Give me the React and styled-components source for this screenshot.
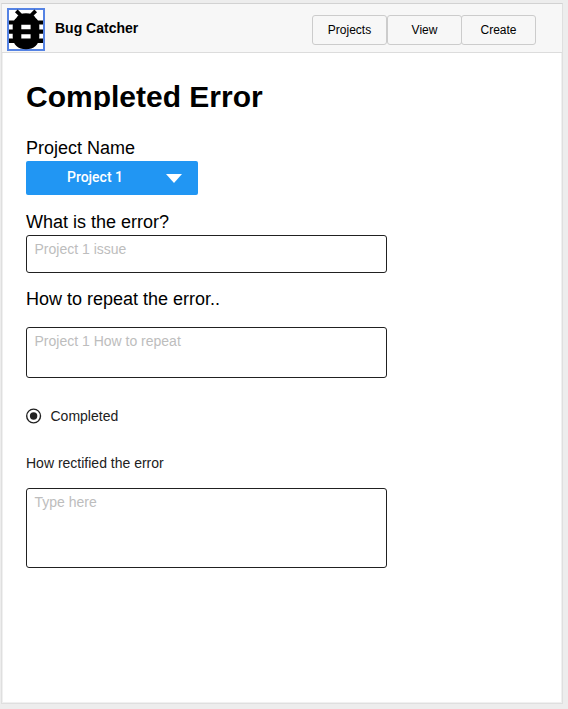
import React from "react";
import styled, { createGlobalStyle } from "styled-components";

const GlobalStyle = createGlobalStyle`
  * { box-sizing: border-box; }
  body {
    margin: 0;
    background: #ededed;
    color: #000;
    font-family: "Liberation Sans", Arial, sans-serif;
  }
`;

const Page = styled.div`
  height: 709px;
  padding: 3px 5px 5px 1px;
  overflow: hidden;
`;

const Frame = styled.div`
  width: 562px;
  height: 701px;
  display: flex;
  flex-direction: column;
  background: #fff;
  border: 1px solid #dfdfdf;
  border-top-color: #d2d2d2;
  box-shadow: inset 0 0 0 1px #f0f0f0;
`;

const Header = styled.header`
  flex: none;
  height: 49px;
  display: flex;
  align-items: flex-start;
  padding: 4px 26px 0 5px;
  background: #f7f7f7;
  border-bottom: 1px solid #dcdcdc;
`;

const Logo = styled.svg`
  flex: none;
  display: block;
  width: 38px;
  height: 43px;
`;

const Brand = styled.div`
  margin: 12px 0 0 10px;
  font-size: 14px;
  line-height: 16px;
  font-weight: 700;
`;

const Nav = styled.nav`
  display: flex;
  margin: 7px 0 0 auto;
`;

const NavButton = styled.button`
  width: 75px;
  height: 30px;
  padding: 0;
  background: #f7f7f7;
  border: 1px solid #ccc;
  border-radius: 3px;
  color: #000;
  font: 12px/28px "Liberation Sans", Arial, sans-serif;

  &:last-child {
    margin-left: -1px;
  }
`;

const Content = styled.main`
  display: flex;
  flex-direction: column;
  align-items: flex-start;
  padding: 24px 24px 0;
`;

const Title = styled.h1`
  height: 33px;
  margin: 0;
  overflow: hidden;
  font-size: 30px;
  line-height: 39px;
  white-space: nowrap;
`;

const Label = styled.div`
  margin-top: ${(p) => p.$gap}px;
  font-size: ${(p) => (p.$small ? 14 : 18)}px;
  line-height: ${(p) => (p.$small ? 16 : 20)}px;
  color: ${(p) => (p.$small ? "#212121" : "#000")};
`;

const Select = styled.button`
  display: flex;
  align-items: center;
  width: 172px;
  height: 34px;
  margin-top: 3px;
  padding: 0 16px 0 0;
  border: 0;
  border-radius: 2px;
  background: #2196f3;
  color: #fff;
  font: 500 14px/16px Roboto, sans-serif;
`;

const SelectText = styled.span`
  flex: 1;
  padding: 0 2px 2px 0;
  text-align: center;
`;

const Caret = styled.svg`
  width: 16px;
  height: 9px;
`;

const Field = styled.div`
  width: 361px;
  height: ${(p) => p.$height}px;
  margin-top: ${(p) => p.$gap}px;
  padding: 5px 7.5px;
  border: 1px solid #212121;
  border-radius: 3px;
  font-size: 14px;
  line-height: 16px;
  color: #bdbdbd;
`;

const RadioRow = styled.div`
  display: flex;
  align-items: center;
  gap: 9px;
  height: 16px;
  margin: 30px 0 0 -0.5px;
  font-size: 14px;
  line-height: 16px;
  color: #212121;
`;

const Radio = styled.svg`
  width: 16px;
  height: 16px;
`;

function BugLogo() {
  return (
    <Logo viewBox="0 0 38 43">
      <rect x="1" y="1" width="36" height="41" fill="#fff" stroke="#5583e4" strokeWidth="2" />
      <path d="M2 12.500h34v4H2zM2 21.500h34v4.300H2zM2 30.500h34v4.500H2z" />
      <path d="M9.300 2.800l5.200 5.200M28.700 2.800l-5.200 5.200" stroke="#000" strokeWidth="3.800" />
      <path d="M19 5.300c4.500 0 8 1.500 9.700 4.700 2.300 2 3.600 4.500 3.600 7.500V29c0 7.500-5.500 12.300-13.300 12.300S5.700 36.500 5.700 29V17.500c0-3 1.300-5.500 3.600-7.500C11 6.800 14.500 5.300 19 5.300z" />
      <path d="M14.300 16.700h9.300v4.500h-9.300zM14.300 26.200h9.300v4.400h-9.300z" fill="#fff" />
    </Logo>
  );
}

export default function App() {
  return (
    <>
      <GlobalStyle />
      <Page>
        <Frame>
          <Header>
            <BugLogo />
            <Brand>Bug Catcher</Brand>
            <Nav>
              <NavButton>Projects</NavButton>
              <NavButton>View</NavButton>
              <NavButton>Create</NavButton>
            </Nav>
          </Header>
          <Content>
            <Title>Completed Error</Title>
            <Label $gap={28}>Project Name</Label>
            <Select>
              <SelectText>Project 1</SelectText>
              <Caret viewBox="0 0 16 9">
                <path d="M0 0h16L8 9z" fill="#fff" />
              </Caret>
            </Select>
            <Label $gap={17}>What is the error?</Label>
            <Field $height={38} $gap={3}>Project 1 issue</Field>
            <Label $gap={16}>How to repeat the error..</Label>
            <Field $height={51} $gap={18}>Project 1 How to repeat</Field>
            <RadioRow>
              <Radio viewBox="0 0 16 16">
                <circle cx="7.600" cy="8" r="6.900" fill="none" stroke="#212121" strokeWidth="1.400" />
                <circle cx="7.600" cy="8" r="3.700" fill="#212121" />
              </Radio>
              Completed
            </RadioRow>
            <Label $gap={31} $small>How rectified the error</Label>
            <Field $height={80} $gap={17}>Type here</Field>
          </Content>
        </Frame>
      </Page>
    </>
  );
}
